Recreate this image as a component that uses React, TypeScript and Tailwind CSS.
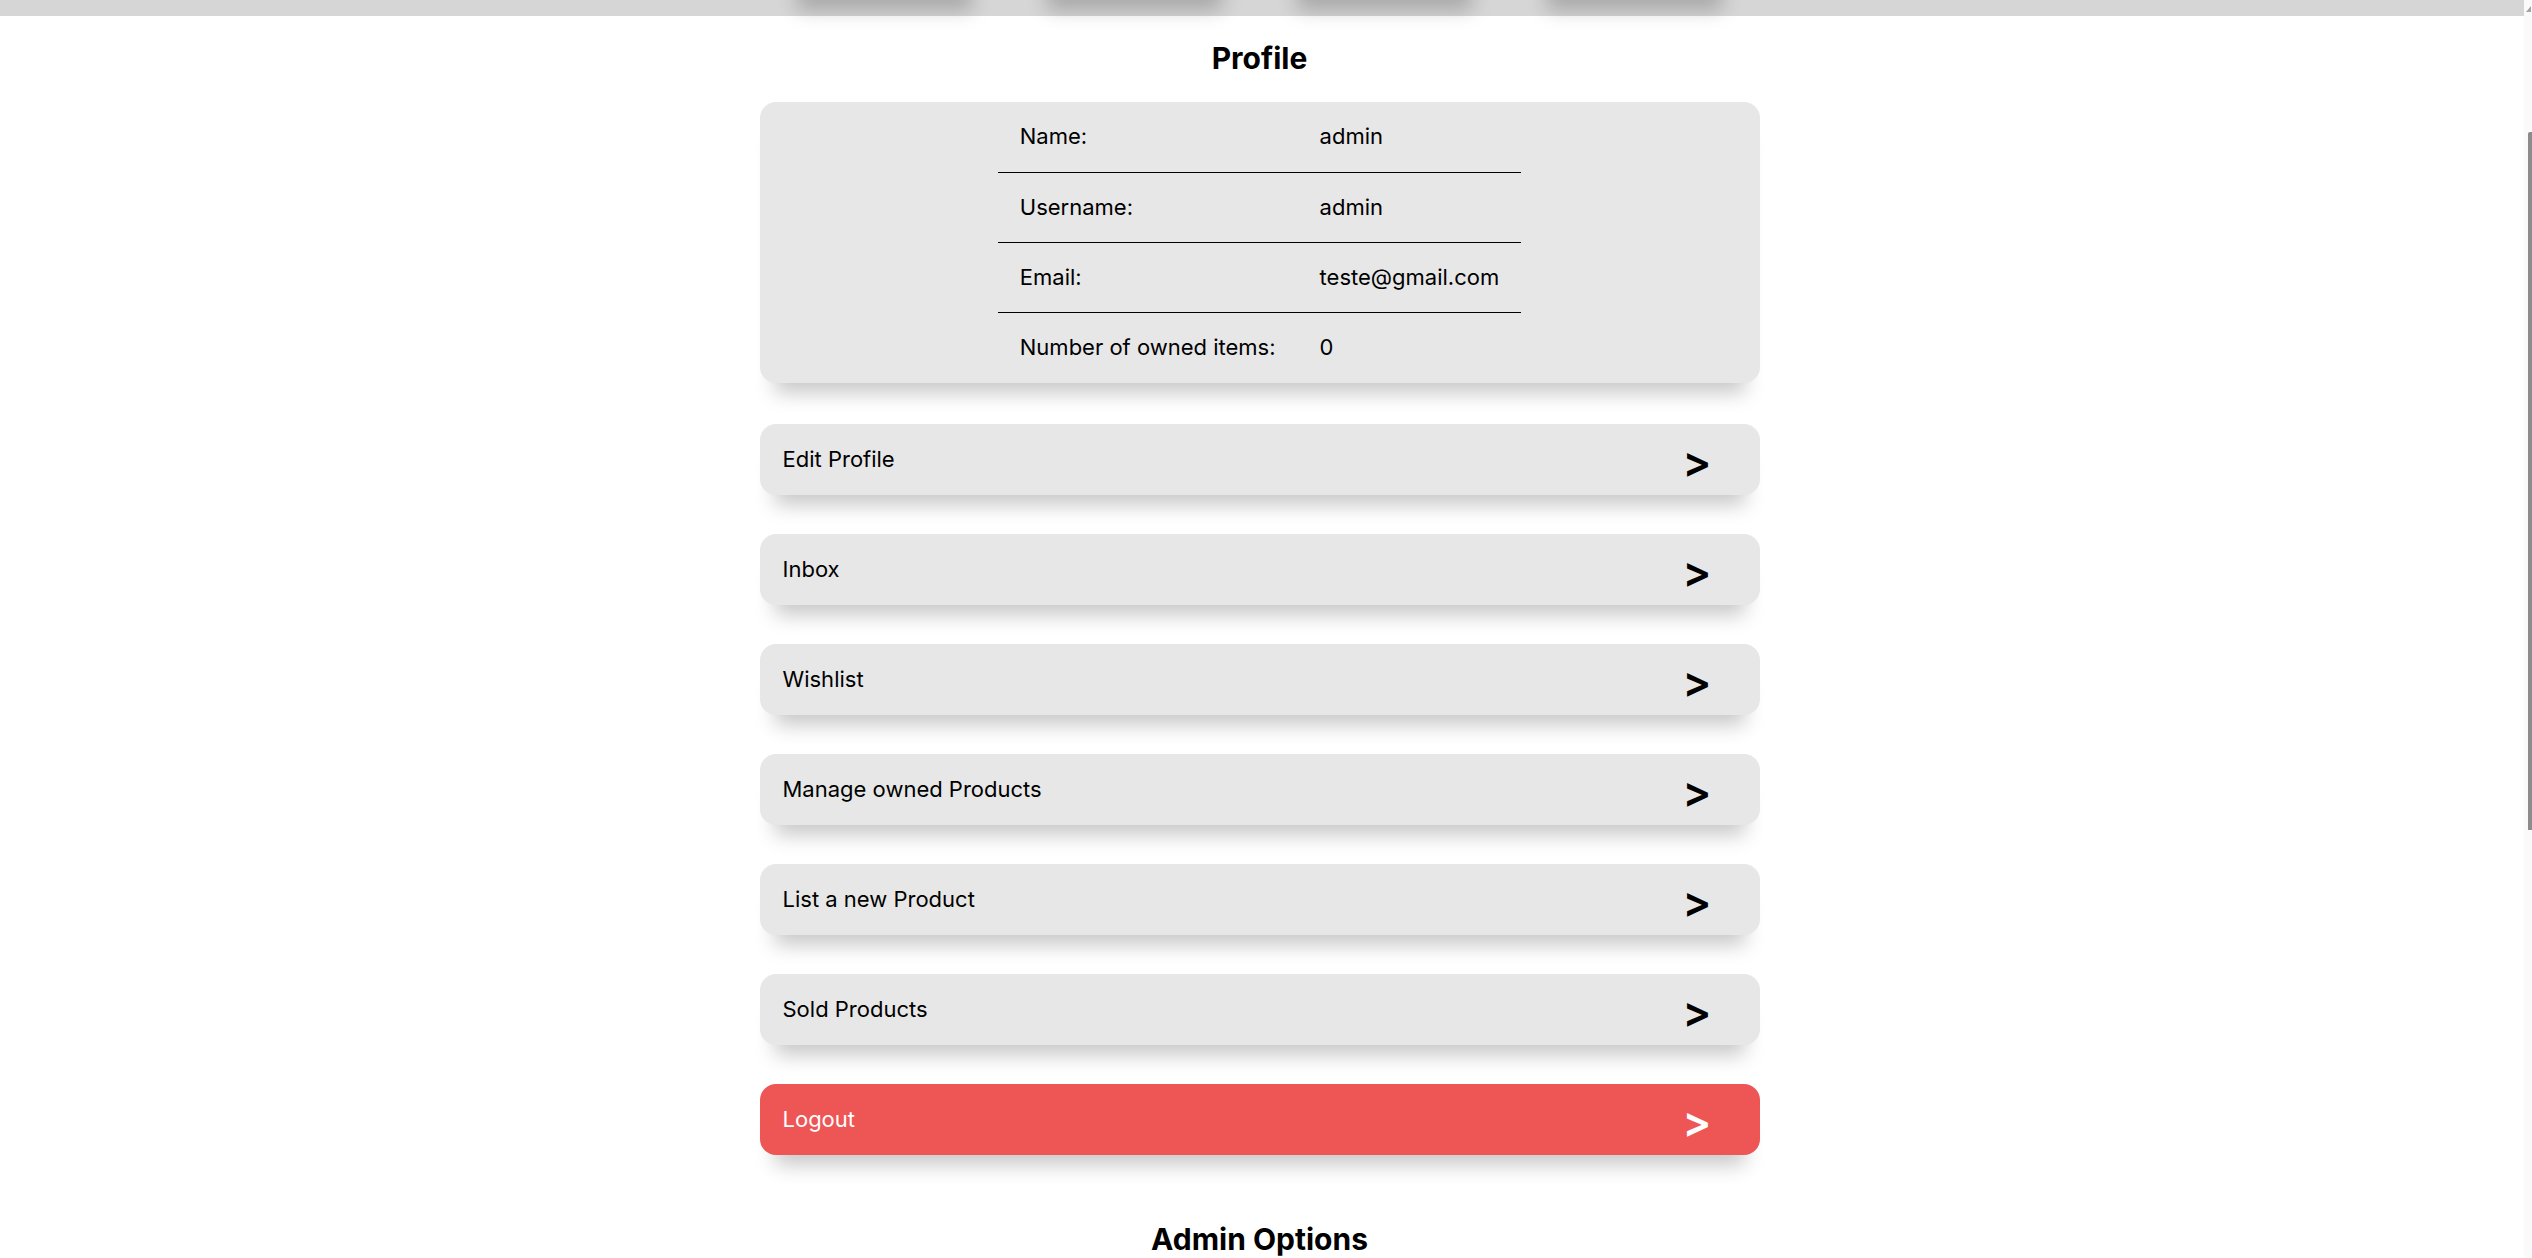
import { useLayoutEffect, useRef } from "react";

const PROFILE = [
  { label: "Name:", value: "admin" },
  { label: "Username:", value: "admin" },
  { label: "Email:", value: "teste@gmail.com" },
  { label: "Number of owned items:", value: "0" },
];

const ACTIONS = [
  "Edit Profile",
  "Inbox",
  "Wishlist",
  "Manage owned Products",
  "List a new Product",
  "Sold Products",
];

const shadow = "shadow-[0_25px_20px_-15px_rgba(0,0,0,0.22)]";

function ActionRow({ label, danger = false }: { label: string; danger?: boolean }) {
  return (
    <button
      className={`flex h-[71px] w-full items-center justify-between rounded-2xl pl-[23px] pr-[48px] text-left ${shadow} ${
        danger ? "bg-[#ee5555] text-white" : "bg-[#e7e7e7] text-black"
      }`}
    >
      <span className="text-[22px]">{label}</span>
      <span className="mt-[4px] text-[43px] leading-none font-semibold">&gt;</span>
    </button>
  );
}

export default function App() {
  const scroller = useRef<HTMLDivElement>(null);

  useLayoutEffect(() => {
    if (scroller.current) scroller.current.scrollTop = 211;
  }, []);

  return (
    <div className="flex h-screen w-full overflow-hidden bg-white font-['Inter',sans-serif] text-black">
      <div ref={scroller} className="flex-1 overflow-hidden">
        <div className="min-h-[2213px]">
          {/* Top navigation, mostly scrolled out of view */}
          <nav className="flex h-[227px] items-end justify-center gap-[45px] bg-[#d6d6d6] pb-[16px] pr-[5px]">
            {[0, 1, 2, 3].map((n) => (
              <div key={n} className={`h-[60px] w-[205px] rounded-2xl bg-[#e7e7e7] ${shadow}`} />
            ))}
          </nav>

          <div className="pr-[5px]">
            <main className="mx-auto flex w-[1000px] flex-col pt-[24px]">
              <h1 className="text-center text-[30px] leading-[36px] font-bold">Profile</h1>

              <section className={`mt-[26px] flex justify-center rounded-2xl bg-[#e7e7e7] ${shadow}`}>
                <table className="border-collapse text-[22px]">
                  <tbody>
                    {PROFILE.map((row, i) => {
                      const last = i === PROFILE.length - 1;
                      return (
                        <tr key={row.label} className={last ? "" : "border-b border-black"}>
                          <td className={`${last ? "h-[71px]" : "h-[70px]"} px-[22px]`}>{row.label}</td>
                          <td className={`${last ? "h-[71px]" : "h-[70px]"} px-[22px]`}>{row.value}</td>
                        </tr>
                      );
                    })}
                  </tbody>
                </table>
              </section>

              <div className="mt-[41px] flex flex-col gap-[39px]">
                {ACTIONS.map((a) => (
                  <ActionRow key={a} label={a} />
                ))}
                <ActionRow label="Logout" danger />
              </div>

              <h2 className="mt-[66px] text-center text-[30px] leading-[36px] font-bold">Admin Options</h2>
            </main>
          </div>
        </div>
      </div>

      {/* Scrollbar */}
      <aside className="flex w-[8px] flex-col bg-[#fafafa]">
        <svg width="8" height="14" viewBox="0 0 8 14" className="mt-[2px]">
          <path d="M2 10 L7 4 L7 10 Z" fill="#a3a3a3" />
        </svg>
        <div className="ml-auto mt-[116px] h-[698px] w-[4px] rounded-tl-[2px] bg-[#8c8c8c]" />
      </aside>
    </div>
  );
}
